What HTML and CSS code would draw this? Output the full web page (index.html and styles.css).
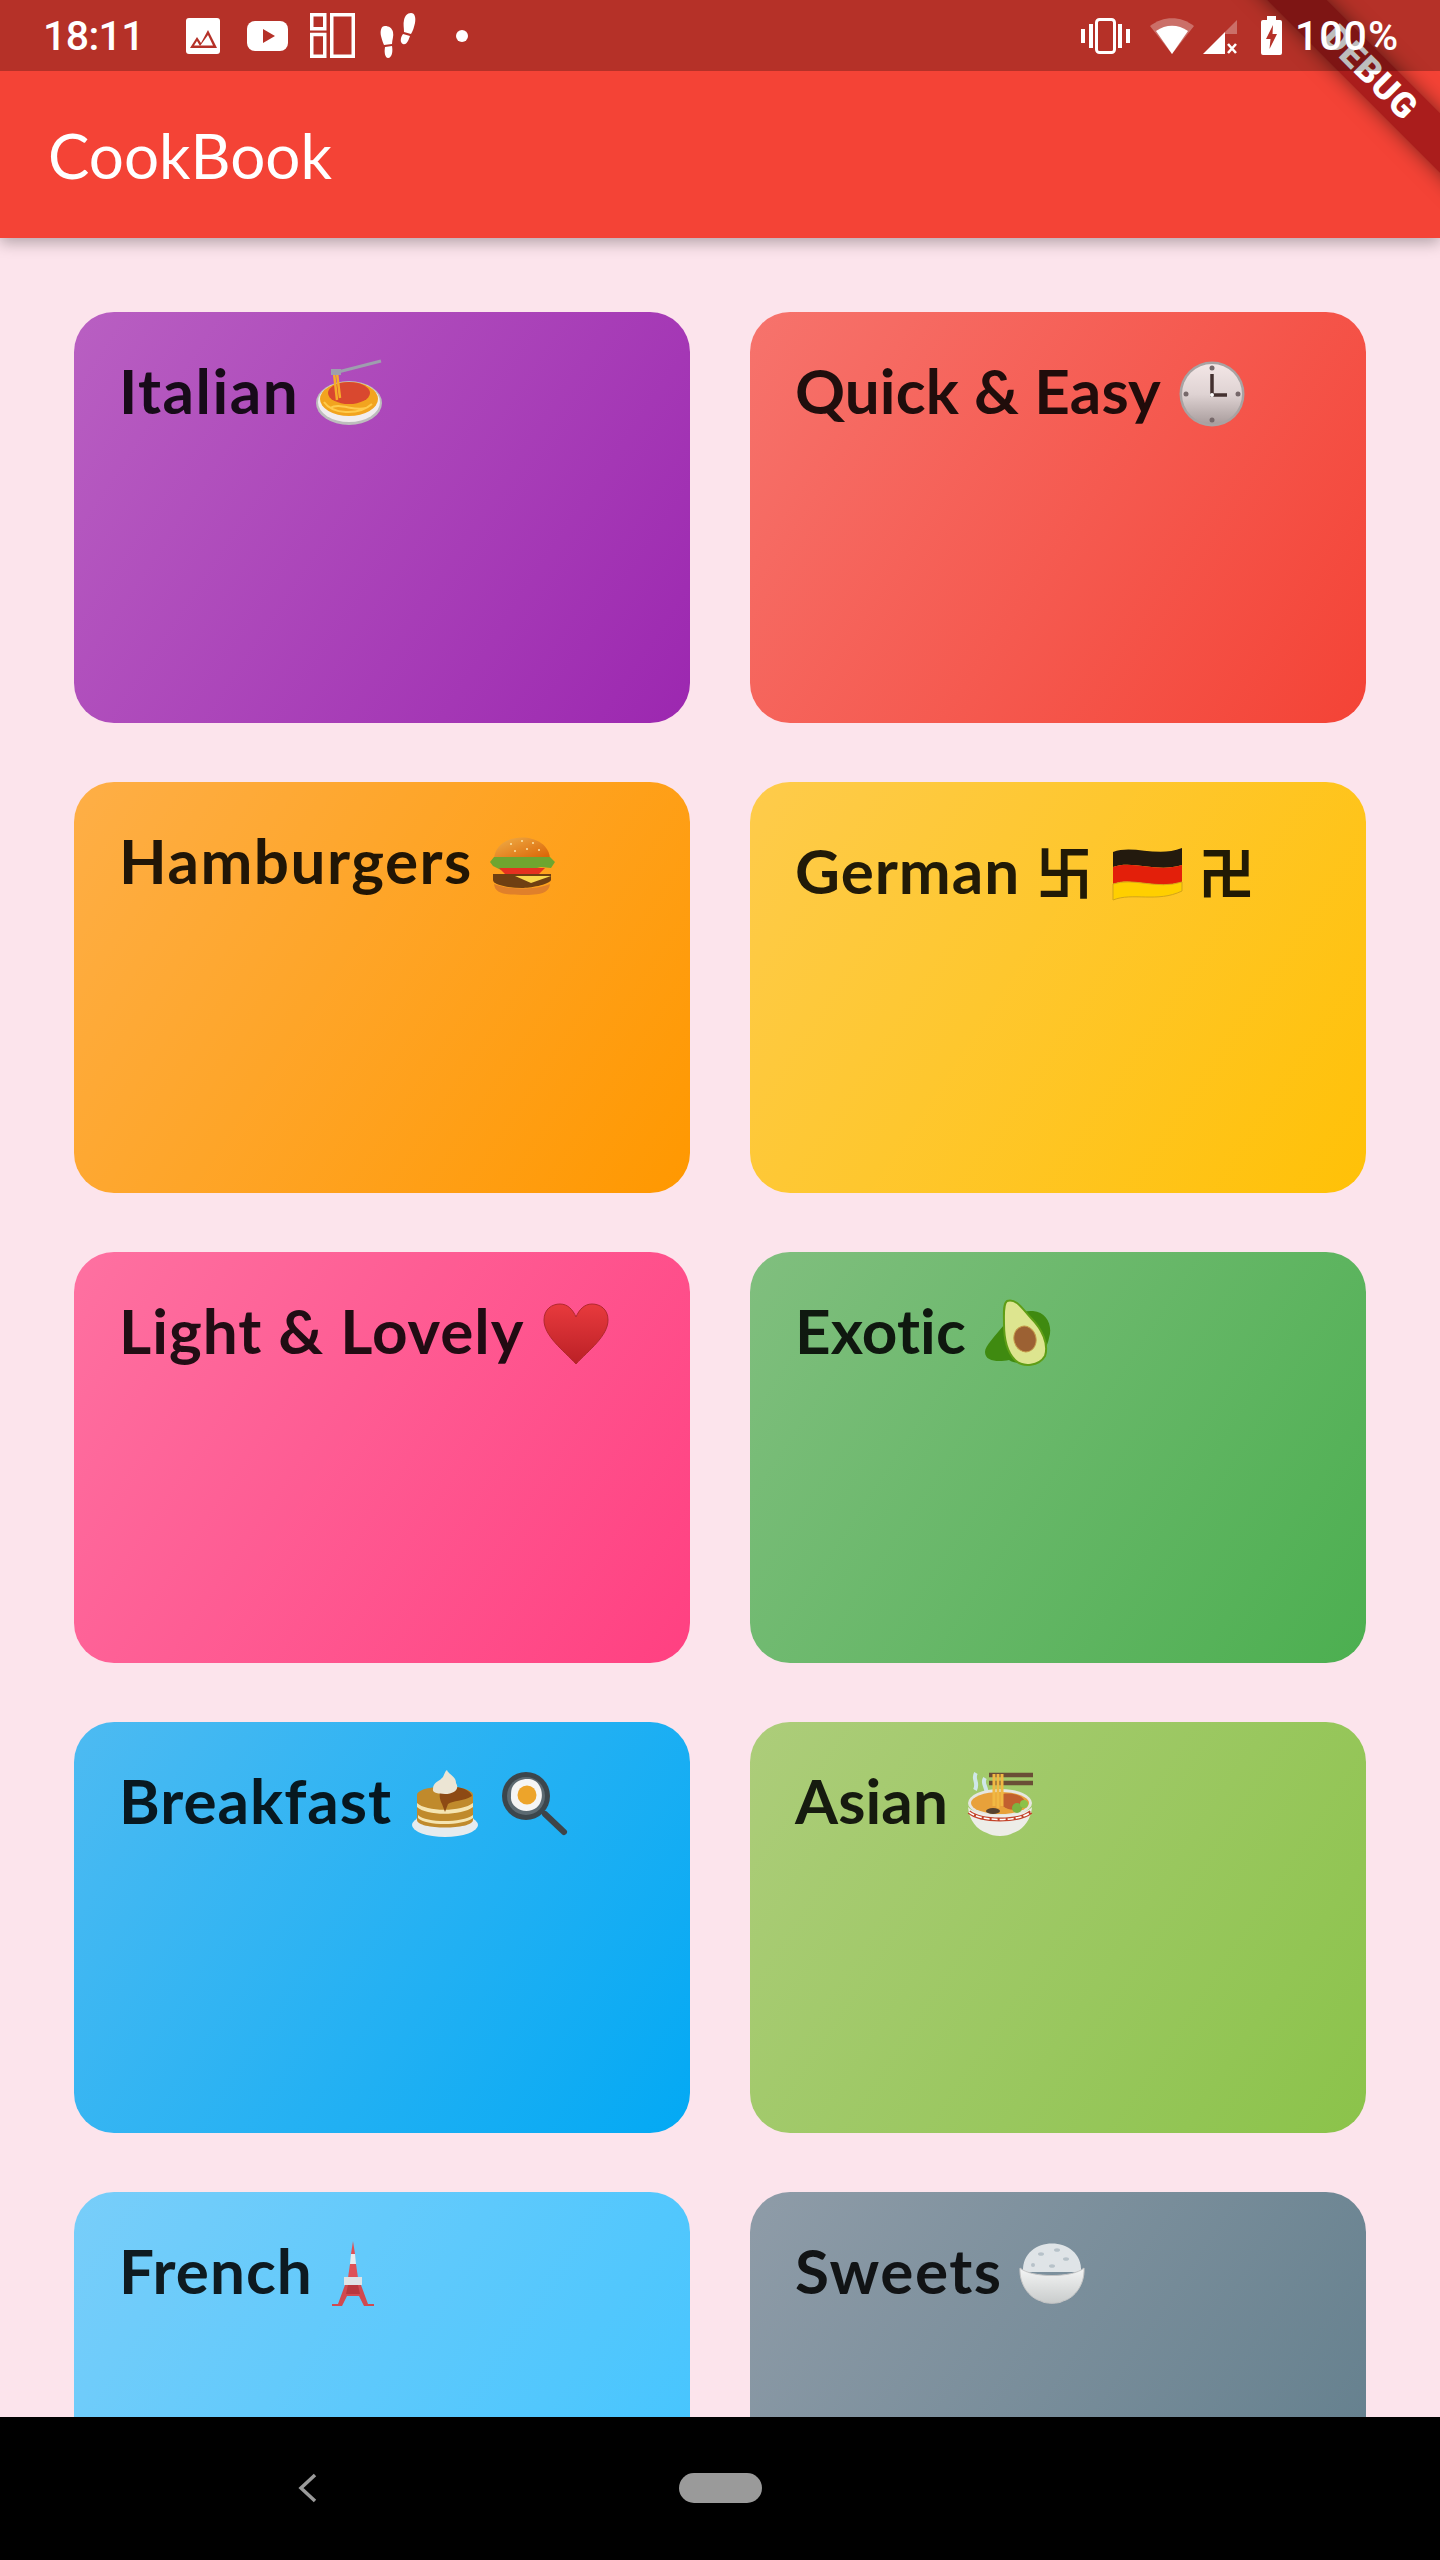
FILE: index.html
```html
<!DOCTYPE html>
<html lang="en">
<head>
<meta charset="utf-8">
<title>CookBook</title>
<link rel="stylesheet" href="styles.css">
</head>
<body>
<div class="phone">
  <header class="top">
    <div class="banner"><span>DEBUG</span></div>
    <div class="status">
      <span class="time">18:11</span>
      <svg class="si si-image" viewBox="0 0 34 36"><rect x="0" y="0" width="34" height="36" rx="3" fill="#fff"/><path d="M4 30 L11 19 L15 25 L22 12 L31 30 Z" fill="#b53128"/><path d="M8 27.500 L11 23 L14 28 L22 17 L27 27.500 Z" fill="#fff"/></svg>
      <svg class="si si-yt" viewBox="0 0 41 30"><rect width="41" height="30" rx="8" fill="#fff"/><path d="M16 8 L28 15 L16 22 Z" fill="#b53128"/></svg>
      <svg class="si si-grid" viewBox="0 0 45 45"><g fill="none" stroke="#fff" stroke-width="3.500"><rect x="1.750" y="1.750" width="13" height="14"/><rect x="1.750" y="21.500" width="13" height="21.750"/><rect x="21.750" y="1.750" width="21.500" height="41.500"/></g></svg>
      <svg class="si si-feet" viewBox="0 0 36 45"><g fill="#fff"><path d="M5 13 C1 13 0 18 1 23 C2 27 3 30 4 32 L12 31 C12 27 14 23 13 19 C12 15 9 13 5 13 Z"/><path d="M5 34 L12 33 C13 38 12 45 8 45 C5 45 4 39 5 34 Z"/><path d="M31 0 C35 0 36 5 35 10 C34 14 33 18 31 21 L24 19 C24 15 23 11 24 7 C25 3 27 0 31 0 Z"/><path d="M23 21 L30 23 C28 29 26 32 23 31 C20 30 20 25 23 21 Z"/></g></svg>
      <span class="dot"></span>
      <span class="status-gap"></span>
      <svg class="si si-vib" viewBox="0 0 49 36"><path fill="#fff" d="M0 11h4v14H0zM8 6h4v24H8zM45 11h4v14h-4zM37 6h4v24h-4z"/><rect x="15.500" y="1.500" width="18" height="33" rx="3" fill="none" stroke="#fff" stroke-width="3"/></svg>
      <svg class="si si-wifi" viewBox="0 0 44 36"><path fill="#fff" fill-opacity=".3" d="M0 8 C13 -2.500 31 -2.500 44 8 L22 36 Z"/><path fill="#fff" d="M6 13 C16 6 28 6 38 13 L22 36 Z"/></svg>
      <svg class="si si-sig" viewBox="0 0 34 34"><path fill="#fff" fill-opacity=".3" d="M34 0 V14 H22 V12 Z"/><path fill="#fff" d="M0 34 L22 12 V34 Z"/><path d="M25 24 L33 33 M33 24 L25 33" stroke="#fff" stroke-width="2.600"/></svg>
      <svg class="si si-bat" viewBox="0 0 21 39"><path fill="#fff" d="M6 0h9v4h4a2 2 0 0 1 2 2v31a2 2 0 0 1-2 2H2a2 2 0 0 1-2-2V6a2 2 0 0 1 2-2h4z"/><path fill="#b53128" d="M12 9 L5 23 H9.500 L8.500 33 L16 18 H11.500 Z"/></svg>
      <span class="pct">100%</span>
    </div>
    <div class="appbar"><h1 class="title">CookBook</h1></div>
  </header>

  <main class="content">
    <section class="grid">
      <article class="card c-purple"><h2 class="name wide">Italian <svg class="emoji" viewBox="0 0 66 66"><ellipse cx="33" cy="43" rx="33" ry="22" fill="#bdbdbd"/><ellipse cx="33" cy="42" rx="31" ry="20" fill="#f1edee"/><ellipse cx="33" cy="39" rx="29" ry="17" fill="#f2a41f"/><path d="M8 42 C16 54 42 56 56 44 M14 48 C24 42 38 52 50 48" stroke="#ffcb4d" stroke-width="2" fill="none"/><ellipse cx="33" cy="33" rx="21" ry="11" fill="#d9482f"/><path d="M18 13 L21 40 M21 13 L24 38" stroke="#f5ad2b" stroke-width="2.500"/><path d="M22 12 L65 1" stroke="#9e9eae" stroke-width="3"/><path d="M15 9 h10 v6 h-10z" fill="#9e9eae"/></svg></h2></article>

      <article class="card c-red"><h2 class="name tight">Quick &amp; Easy <svg class="emoji" viewBox="0 0 66 66"><defs><linearGradient id="cl" x1="0" y1="0" x2="0" y2="1"><stop offset="0" stop-color="#f3e6e6"/><stop offset=".5" stop-color="#dfd3d3"/><stop offset="1" stop-color="#a99d9d"/></linearGradient></defs><circle cx="33" cy="34" r="32.500" fill="#a8a3a3"/><circle cx="33" cy="34" r="30" fill="url(#cl)"/><g fill="#76686a"><circle cx="33" cy="8" r="2.500"/><circle cx="33" cy="60" r="2.500"/><circle cx="7" cy="34" r="2.500"/><circle cx="59" cy="34" r="2.500"/></g><path d="M33 14 V35 H48" stroke="#43302f" stroke-width="3.500" fill="none"/><circle cx="33" cy="35" r="2" fill="#fff"/></svg></h2></article>

      <article class="card c-orange"><h2 class="name wide">Hamburgers <svg class="emoji" viewBox="0 0 66 66"><defs><linearGradient id="bn" x1="0" y1="0" x2="1" y2="1"><stop offset="0" stop-color="#f0b04a"/><stop offset="1" stop-color="#d95f00"/></linearGradient></defs><path d="M5 30 C5 0 61 0 61 30 Z" fill="url(#bn)"/><g fill="#fbe3a6"><circle cx="22" cy="14" r="1"/><circle cx="33" cy="11" r="1"/><circle cx="44" cy="13" r="1"/><circle cx="26" cy="21" r="1"/><circle cx="38" cy="19" r="1"/><circle cx="50" cy="20" r="1"/></g><path d="M1 32 L5 27 H61 L66 32 L62 38 L52 37 L40 40 L26 38 L12 40 L4 36 Z" fill="#6fa52f"/><path d="M10 38 H56 L50 44 H16 Z" fill="#e53120"/><path d="M4 44 H62 V50 C60 55 40 58 33 58 C20 58 4 55 4 50 Z" fill="#6f3f12"/><path d="M26 46 H62 L42 53 Z" fill="#f9d74c"/><path d="M5 54 C20 60 46 60 61 54 C60 63 52 65 33 65 C14 65 6 63 5 54 Z" fill="#e0802a"/></svg></h2></article>

      <article class="card c-amber"><h2 class="name name-cjk">German <span class="sym">卐</span> <svg class="emoji flag" viewBox="0 0 69 66"><path d="M0 12 C20 4 44 18 69 8 V25 C44 33 20 20 0 27 Z" fill="#231a0e"/><path d="M0 27 C20 20 44 33 69 25 V42 C44 50 20 37 0 44 Z" fill="#e31f0a"/><path d="M0 44 C20 37 44 50 69 42 V51 C44 63 20 52 0 60 Z" fill="#ffcf00" stroke="#d3a519" stroke-width="1"/></svg> <span class="sym">卍</span></h2></article>

      <article class="card c-pink"><h2 class="name">Light &amp; Lovely <svg class="emoji" viewBox="0 0 66 66"><defs><linearGradient id="ht" x1="0" y1="0" x2="0" y2="1"><stop offset="0" stop-color="#e83a3d"/><stop offset="1" stop-color="#bb2026"/></linearGradient></defs><path d="M33 64 C20 50 1 36 1 20 C1 9 9 4 17 4 C25 4 30 10 33 17 C36 10 41 4 49 4 C57 4 65 9 65 20 C65 36 46 50 33 64 Z" fill="url(#ht)" stroke="#b1282d" stroke-width="1"/></svg></h2></article>

      <article class="card c-green"><h2 class="name tight">Exotic <svg class="emoji" viewBox="0 0 66 66"><path d="M48 11 C62 12 68 26 64 38 C60 60 36 68 24 60 C14 62 0 62 0 52 C0 46 10 36 19 25 C26 16 38 10 48 11 Z" fill="#3f8a10"/><path d="M22 1 C32 -2 38 10 46 18 C57 29 64 44 60 56 C54 66 38 68 30 60 C22 52 19 38 19 24 C19 14 18 4 22 1 Z" fill="#dde58f" stroke="#5f9e16" stroke-width="2"/><ellipse cx="40" cy="39" rx="11" ry="13" fill="#9c6133" transform="rotate(-15 40 39)" stroke="#c59a4a" stroke-width="1"/></svg></h2></article>

      <article class="card c-blue"><h2 class="name">Breakfast <svg class="emoji" viewBox="0 0 66 66"><ellipse cx="33" cy="55" rx="33" ry="12" fill="#e6ebee"/><path d="M5 25 C5 14 61 14 61 25 V50 C61 60 5 60 5 50 Z" fill="#c08a2c"/><path d="M5 33 C14 42 50 42 61 33 V37 C50 46 14 46 5 37 Z M6 45 C14 53 50 53 61 45 V48 C50 56 14 56 6 48 Z" fill="#f5e5b2"/><path d="M30 18 C40 14 58 18 60 26 C50 32 42 30 36 34 L33 42 L30 34 C28 30 26 24 30 18 Z" fill="#8d4a14"/><path d="M21 19 C21 12 28 11 31 7 C33 3 33 1 35 0 C36 4 44 6 44 13 C48 19 42 24 33 24 C26 24 20 23 21 19 Z" fill="#ece5d4"/></svg> <svg class="emoji" viewBox="0 0 66 66"><path d="M43 44 L62 62" stroke="#3e4449" stroke-width="6" stroke-linecap="round"/><circle cx="24" cy="26" r="24" fill="#3c464c"/><circle cx="24" cy="26" r="19" fill="#5c6a72"/><path d="M11 16 C16 8 32 6 37 15 C42 22 41 37 30 40 C20 44 8 36 9 27 C9 22 9 19 11 16 Z" fill="#f5f5f5"/><circle cx="25" cy="25" r="9.500" fill="#eda42a"/></svg></h2></article>

      <article class="card c-lime"><h2 class="name tight">Asian <svg class="emoji" viewBox="0 0 66 66"><path d="M22 5 H66 M22 13 H66" stroke="#6a4e36" stroke-width="4.500"/><path d="M9 3 C5 9 12 12 8 20 M18 8 C14 14 21 17 19 24" stroke="#cfe7e8" stroke-width="4" fill="none"/><ellipse cx="33" cy="33" rx="32" ry="14" fill="#e6e6e0"/><ellipse cx="33" cy="33" rx="29" ry="11" fill="#e8a13a"/><path d="M36 24 C50 22 60 28 58 36 C50 42 40 40 36 36 Z" fill="#c2602f"/><circle cx="50" cy="38" r="5" fill="#7db240"/><circle cx="57" cy="34" r="4" fill="#8cc24a"/><ellipse cx="26" cy="41" rx="7" ry="3" fill="#57422f"/><path d="M27 4 V36 M31 4 V38 M35 4 V36" stroke="#f1b843" stroke-width="3"/><path d="M1 37 C10 48 56 48 65 37 C64 50 56 60 46 63 C40 67 26 67 20 63 C10 60 2 50 1 37 Z" fill="#ededE8"/><path d="M2 42 C14 52 52 52 64 42" stroke="#c4432a" stroke-width="4" fill="none"/><path d="M2 42 C14 52 52 52 64 42" stroke="#fff" stroke-width="1.500" stroke-dasharray="6 2" fill="none"/></svg></h2></article>

      <article class="card c-sky"><h2 class="name">French<svg class="emoji tower" viewBox="0 0 46 66"><path d="M23 1 L25 14 H21 Z" fill="#de5157"/><path d="M21 14 h4 l1 10 h-6z" fill="#e8ecef"/><path d="M20 24 h6 l2 14 h-10z" fill="#de5157"/><rect x="14" y="37" width="18" height="8" fill="#dfe3e6"/><path d="M15 45 H31 L38 64 H44 V66 H34 L29 56 H17 L12 66 H2 V64 H8 Z" fill="#d14a50"/><path d="M18 45 h10 l2 9 h-14z" fill="#b9383e"/></svg></h2></article>

      <article class="card c-grey"><h2 class="name wide">Sweets <svg class="emoji" viewBox="0 0 66 66"><defs><linearGradient id="rc" x1="0" y1="0" x2="0" y2="1"><stop offset="0" stop-color="#f4f5f5"/><stop offset="1" stop-color="#c9cccc"/></linearGradient></defs><path d="M4 32 C2 -6 64 -6 62 32 Z" fill="#dfe4e7"/><g fill="#b7c2c9"><ellipse cx="22" cy="14" rx="3" ry="1.800"/><ellipse cx="38" cy="10" rx="3" ry="1.800"/><ellipse cx="47" cy="19" rx="3" ry="1.800"/><ellipse cx="14" cy="25" rx="2" ry="2"/><ellipse cx="33" cy="26" rx="3" ry="1.800"/></g><path d="M1 28 C12 38 54 38 65 28 C66 44 56 58 44 61 C40 64 26 64 22 61 C10 58 0 44 1 28 Z" fill="url(#rc)" stroke="#c6c6c6" stroke-width="1"/></svg></h2></article>
    </section>
  </main>

  <nav class="nav">
    <svg class="back" viewBox="0 0 19 30"><path d="M17 2 L3 15 L17 28" fill="none" stroke="#9a9a9a" stroke-width="3.500"/></svg>
    <span class="pill"></span>
  </nav>
</div>
</body>
</html>
```
FILE: styles.css
```css
* { box-sizing: border-box; }
html, body { margin: 0; padding: 0; background: #000; }
.phone {
  width: 1440px;
  height: 2560px;
  display: flex;
  flex-direction: column;
  overflow: hidden;
  background: #fce4ec;
}

/* Header */
.top {
  position: relative;
  height: 238px;
  flex: none;
  z-index: 2;
  background: #f44336;
  box-shadow: 0 5px 14px rgba(0, 0, 0, .28);
  overflow: visible;
}
.status {
  position: relative;
  z-index: 2;
  height: 71px;
  display: flex;
  align-items: center;
  padding-left: 43px;
  background: rgba(0, 0, 0, .26);
  color: #fff;
  font-family: Roboto, "Liberation Sans", sans-serif;
  font-size: 41px;
  font-weight: 500;
}
.time { width: 143px; flex: none; letter-spacing: -.6px; }
.si { display: block; flex: none; }
.si-image { width: 34px; height: 36px; margin-right: 27px; }
.si-yt { width: 41px; height: 30px; margin-right: 22px; }
.si-grid { width: 45px; height: 45px; margin-right: 25px; }
.si-feet { width: 36px; height: 45px; margin-right: 40px; }
.dot { width: 12px; height: 12px; border-radius: 50%; background: #fff; flex: none; }
.status-gap { flex: 1; }
.si-vib { width: 49px; height: 36px; margin-right: 20px; }
.si-wifi { width: 44px; height: 36px; margin-right: 9px; }
.si-sig { width: 34px; height: 34px; margin-right: 24px; margin-top: 3px; }
.si-bat { width: 21px; height: 39px; margin-right: 13px; }
.pct { width: 145px; flex: none; letter-spacing: 1px; }

.appbar {
  height: 167px;
  display: flex;
  align-items: center;
  padding-left: 48px;
}
.title {
  margin: 0;
  font-family: Lato, sans-serif;
  font-weight: 400;
  font-size: 62px;
  color: #fff;
}

.banner {
  position: absolute;
  z-index: 1;
  top: 0;
  right: 0;
  width: 240px;
  height: 240px;
  overflow: hidden;
  pointer-events: none;
}
.banner span {
  position: absolute;
  left: -30px;
  top: 52px;
  width: 400px;
  height: 42px;
  line-height: 42px;
  transform: rotate(45deg);
  transform-origin: center;
  text-align: center;
  background: #aa1d1c;
  box-shadow: 0 0 20px rgba(0, 0, 0, .5);
  color: #fff;
  font-family: Roboto, "Liberation Sans", sans-serif;
  font-weight: 900;
  font-size: 35px;
  letter-spacing: 1px;
}

/* Grid */
.content {
  flex: 1;
  min-height: 0;
  overflow: hidden;
  padding: 74px 74px 0;
}
.grid {
  display: grid;
  grid-template-columns: 616px 616px;
  grid-auto-rows: 410.5px;
  column-gap: 60px;
  row-gap: 59.5px;
}
.card {
  border-radius: 40px;
  padding: 41px 45px;
}
.name {
  margin: 0;
  font-family: Lato, "Noto Sans CJK SC", sans-serif;
  font-weight: 700;
  font-size: 62px;
  letter-spacing: 1px;
  color: rgba(0, 0, 0, .87);
  white-space: nowrap;
}
.wide { letter-spacing: 1.5px; }
.tight { letter-spacing: .1px; }
.name-cjk { padding-top: 6px; }
.sym { font-size: 56px; }
.emoji {
  display: inline-block;
  width: 66px;
  height: 66px;
  margin: 0 4px;
  vertical-align: -12px;
  overflow: visible;
}
.wide .emoji { margin-left: 0; }
.flag { width: 69px; margin-right: 0; }
.tower { width: 46px; margin-left: 17px; }

.c-purple { background: linear-gradient(123.6deg, rgba(156, 39, 176, .7), #9c27b0); }
.c-red    { background: linear-gradient(123.6deg, rgba(244, 67, 54, .7), #f44336); }
.c-orange { background: linear-gradient(123.6deg, rgba(255, 152, 0, .7), #ff9800); }
.c-amber  { background: linear-gradient(123.6deg, rgba(255, 193, 7, .7), #ffc107); }
.c-pink   { background: linear-gradient(123.6deg, rgba(255, 64, 129, .7), #ff4081); }
.c-green  { background: linear-gradient(123.6deg, rgba(76, 175, 80, .7), #4caf50); }
.c-blue   { background: linear-gradient(123.6deg, rgba(3, 169, 244, .7), #03a9f4); }
.c-lime   { background: linear-gradient(123.6deg, rgba(139, 195, 74, .7), #8bc34a); }
.c-sky    { background: linear-gradient(123.6deg, rgba(64, 196, 255, .7), #40c4ff); }
.c-grey   { background: linear-gradient(123.6deg, rgba(96, 125, 139, .7), #607d8b); }

/* Nav */
.nav {
  height: 143px;
  flex: none;
  position: relative;
  z-index: 3;
  background: #000;
  display: flex;
  align-items: center;
  padding-left: 298px;
}
.back { width: 19px; height: 30px; margin-right: 362px; margin-top: -1px; }
.pill { width: 83px; height: 30px; border-radius: 15px; background: #9a9a9a; margin-top: -1px; }
```
